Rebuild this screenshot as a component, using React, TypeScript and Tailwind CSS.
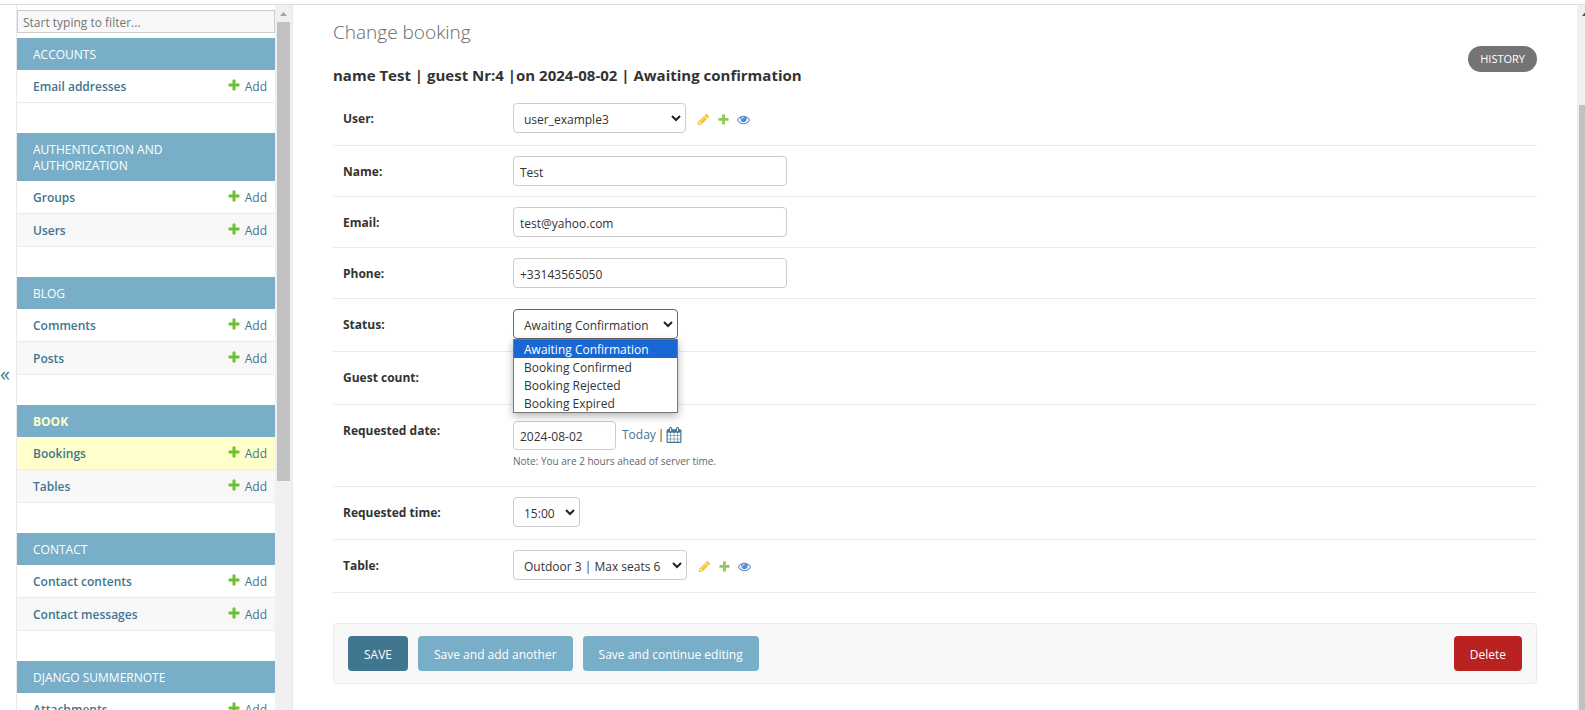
import { useState } from "react";
import type { ReactNode } from "react";

type Model = { name: string; current?: boolean };
type AppGroup = { title: string; current?: boolean; models: Model[] };

const groups: AppGroup[] = [
  { title: "Accounts", models: [{ name: "Email addresses" }] },
  { title: "Authentication and Authorization", models: [{ name: "Groups" }, { name: "Users" }] },
  { title: "Blog", models: [{ name: "Comments" }, { name: "Posts" }] },
  { title: "Book", current: true, models: [{ name: "Bookings", current: true }, { name: "Tables" }] },
  { title: "Contact", models: [{ name: "Contact contents" }, { name: "Contact messages" }] },
  { title: "Django Summernote", models: [{ name: "Attachments" }] },
];

const statuses = ["Awaiting Confirmation", "Booking Confirmed", "Booking Rejected", "Booking Expired"];

const PLUS =
  "M1600 796v192q0 40-28 68t-68 28h-416v416q0 40-28 68t-68 28h-192q-40 0-68-28t-28-68v-416h-416q-40 0-68-28t-28-68v-192q0-40 28-68t68-28h416v-416q0-40 28-68t68-28h192q40 0 68 28t28 68v416h416q40 0 68 28t28 68z";
const PENCIL =
  "M491 1536l91-91-235-235-91 91v107h128v128h107zm523-928q0-22-22-22-10 0-17 7l-542 542q-7 7-7 17 0 22 22 22 10 0 17-7l542-542q7-7 7-17zm-54-192l416 416-832 832h-416v-416zm683 96q0 53-37 90l-166 166-416-416 166-165q36-38 90-38 53 0 91 38l235 234q37 39 37 91z";
const EYE =
  "M1664 960q-152-236-381-353 61 104 61 225 0 185-131.5 316.5t-316.5 131.5-316.5-131.5-131.5-316.5q0-121 61-225-229 117-381 353 133 205 333.5 326.5t434.5 121.5 434.5-121.5 333.5-326.5zm-720-384q0-20-14-34t-34-14q-125 0-214.5 89.5t-89.5 214.5q0 20 14 34t34 14 34-14 14-34q0-86 61-147t147-61q20 0 34-14t14-34zm848 384q0 34-20 69-140 230-376.5 368.5t-499.5 138.5-499.5-139-376.5-368q-20-35-20-69t20-69q140-229 376.5-368t499.5-139 499.5 139 376.5 368q20 35 20 69z";
const CALENDAR =
  "M192 1664h288v-288h-288v288zm352 0h320v-288h-320v288zm-352-352h288v-320h-288v320zm352 0h320v-320h-320v320zm-352-384h288v-288h-288v288zm736 736h320v-288h-320v288zm-384-736h320v-288h-320v288zm768 736h288v-288h-288v288zm-384-352h320v-320h-320v320zm-352-864v-288q0-13-9.5-22.5t-22.5-9.5h-64q-13 0-22.5 9.5t-9.5 22.5v288q0 13 9.5 22.5t22.5 9.5h64q13 0 22.5-9.5t9.5-22.5zm736 864h288v-320h-288v320zm-384-384h320v-288h-320v288zm384 0h288v-288h-288v288zm32-480v-288q0-13-9.5-22.5t-22.5-9.5h-64q-13 0-22.5 9.5t-9.5 22.5v288q0 13 9.5 22.5t22.5 9.5h64q13 0 22.5-9.5t9.5-22.5zm384-64v1280q0 52-38 90t-90 38h-1408q-52 0-90-38t-38-90v-1280q0-52 38-90t90-38h128v-96q0-66 47-113t113-47h64q66 0 113 47t47 113v96h384v-96q0-66 47-113t113-47h64q66 0 113 47t47 113v96h128q52 0 90 38t38 90z";

function Icon({ d, className }: { d: string; className: string }) {
  return (
    <svg viewBox="0 0 1792 1792" fill="currentColor" aria-hidden="true" className={className}>
      <path d={d} />
    </svg>
  );
}

function Sidebar() {
  return (
    <nav aria-label="Sidebar" className="min-h-0 w-[258px] shrink-0 overflow-hidden pt-[5px]">
      <input
        type="search"
        aria-label="Filter navigation items"
        placeholder="Start typing to filter..."
        className="mb-[5px] block h-[23px] w-full border border-[#ccc] bg-[#f8f8f8] px-[5px] pt-0.5 placeholder:text-[#757575]"
      />
      {groups.map((group) => (
        <section key={group.title} className="mb-[30px]">
          <h2
            className={
              group.current
                ? "bg-[#79aec8] pt-[9px] pr-20 pb-[7px] pl-4 leading-4 font-bold text-[#ffc] uppercase"
                : "bg-[#79aec8] pt-[9px] pr-20 pb-[7px] pl-4 leading-4 text-white uppercase"
            }
          >
            <a href="#app">{group.title}</a>
          </h2>
          <ul>
            {group.models.map((model) => (
              <li
                key={model.name}
                className={
                  model.current
                    ? "flex h-[33px] items-center justify-between border-b border-[#eaeaea] bg-[#ffc] pt-0.5 pr-2 pl-4 text-[#417690]"
                    : "flex h-[33px] items-center justify-between border-b border-[#eaeaea] pt-0.5 pr-2 pl-4 text-[#417690] even:bg-[#f8f8f8]"
                }
              >
                <a href="#model" className="font-semibold">
                  {model.name}
                </a>
                <a href="#add" className="flex items-center gap-1">
                  <Icon d={PLUS} className="mb-1 size-[14px] text-[#70bf2b]" />
                  Add
                </a>
              </li>
            ))}
          </ul>
        </section>
      ))}
    </nav>
  );
}

function Row({ label, id, tall, children }: { label: string; id: string; tall?: boolean; children?: ReactNode }) {
  return (
    <div
      className={
        tall
          ? "flex min-h-[53px] border-b border-[#eaeaea] px-[10px] pt-[10px] pb-3"
          : "flex min-h-[51px] border-b border-[#eaeaea] p-[10px]"
      }
    >
      <label htmlFor={id} className="h-[30px] w-[170px] shrink-0 leading-8 font-bold">
        {label}
      </label>
      <div className="flex items-center">{children}</div>
    </div>
  );
}

function Select({ id, options, className }: { id: string; options: string[]; className: string }) {
  return (
    <span className="relative flex">
      <select
        id={id}
        className={"h-[30px] appearance-none rounded border bg-white pt-[3px] pr-5 pl-[10px] outline-none " + className}
      >
        {options.map((option) => (
          <option key={option}>{option}</option>
        ))}
      </select>
      <svg
        viewBox="0 0 10 7"
        aria-hidden="true"
        className="pointer-events-none absolute top-3 right-[5px] h-[7px] w-[10px]"
      >
        <path d="M1 1l4 4 4-4" fill="none" stroke="#222" strokeWidth="2" />
      </svg>
    </span>
  );
}

function RelatedLinks() {
  return (
    <span className="ml-[11px] flex items-center gap-[7px] pt-0.5 opacity-80">
      <a href="#change" aria-label="Change selected">
        <Icon d={PENCIL} className="size-[13px] text-[#efb80b]" />
      </a>
      <a href="#add" aria-label="Add another">
        <Icon d={PLUS} className="size-[13px] text-[#70bf2b]" />
      </a>
      <a href="#view" aria-label="View selected">
        <Icon d={EYE} className="size-[13px] text-[#2b70bf]" />
      </a>
    </span>
  );
}

const textInput = "h-[30px] w-[274px] rounded border border-[#ccc] px-1.5 pt-0.5";

export default function App() {
  const [status, setStatus] = useState(statuses[0]);
  return (
    <div className="flex h-screen flex-col overflow-hidden bg-white font-['Open_Sans','Noto_Sans',sans-serif] text-[12px] text-[#333]">
      <div className="h-[5px] shrink-0 border-b border-[#ddd]" />
      <div className="flex min-h-0 flex-1">
        <button
          type="button"
          aria-label="Toggle navigation"
          className="flex w-[17px] shrink-0 items-center border-r border-[#eaeaea] pt-8 text-xl text-[#417690]"
        >
          «
        </button>
        <Sidebar />
        <div aria-hidden="true" className="w-[18px] shrink-0 border-r border-[#eaeaea] bg-[#f0f0f0]">
          <svg viewBox="0 0 17 17" className="size-[17px]">
            <path d="M5 11l3.500-4 3.500 4z" fill="#a3a3a3" />
          </svg>
          <div className="ml-0.5 h-[459px] w-[13px] bg-[#c1c1c1]" />
        </div>

        <main className="min-w-0 flex-1 pt-[15px] pr-10 pl-10">
          <h1 className="h-[43px] text-[19px] leading-6 font-light text-[#666]">Change booking</h1>
          <div className="flex h-[30px] items-start justify-between">
            <h2 className="text-[15px] leading-6 font-bold">
              name Test | guest Nr:4 |on 2024-08-02 | Awaiting confirmation
            </h2>
            <a
              href="#history"
              className="-mt-[17px] flex h-[26px] items-center rounded-full bg-[#747474] px-3 text-[11px] text-white uppercase"
            >
              History
            </a>
          </div>

          <form onSubmit={(event) => event.preventDefault()}>
            <Row label="User:" id="user" tall>
              <Select id="user" options={["user_example3"]} className="w-[173px] border-[#ccc]" />
              <RelatedLinks />
            </Row>
            <Row label="Name:" id="name">
              <input id="name" defaultValue="Test" className={textInput} />
            </Row>
            <Row label="Email:" id="email">
              <input id="email" type="email" defaultValue="test@yahoo.com" className={textInput} />
            </Row>
            <Row label="Phone:" id="phone">
              <input id="phone" type="tel" defaultValue="+33143565050" className={textInput} />
            </Row>
            <Row label="Status:" id="status" tall>
              <div className="relative">
                <Select id="status" options={[status]} className="w-[165px] border-[#666]" />
                <ul
                  role="listbox"
                  aria-label="Status options"
                  className="absolute top-full left-0 z-10 w-full border border-[#767676] bg-white shadow-[0_3px_8px_rgba(0,0,0,0.3)]"
                >
                  {statuses.map((option) => (
                    <li
                      key={option}
                      role="option"
                      aria-selected={option === status}
                      onClick={() => setStatus(option)}
                      className="h-[18px] pl-[10px] leading-5 whitespace-nowrap aria-selected:bg-[#1967d2] aria-selected:text-white"
                    >
                      {option}
                    </li>
                  ))}
                </ul>
              </div>
            </Row>
            <Row label="Guest count:" id="guests" tall>
              <Select id="guests" options={["4"]} className="w-[67px] border-[#ccc]" />
            </Row>
            <div className="flex h-[82px] border-b border-[#eaeaea] px-[10px] pt-[10px]">
              <label htmlFor="date" className="h-[30px] w-[170px] shrink-0 leading-8 font-bold">
                Requested date:
              </label>
              <div className="pt-1.5">
                <div className="flex items-start">
                  <input
                    id="date"
                    defaultValue="2024-08-02"
                    className="h-[29px] w-[103px] rounded border border-[#ccc] px-1.5 pt-0.5"
                  />
                  <span className="ml-1.5 flex h-7 items-center gap-0.5">
                    <a href="#today" className="text-[#417690]">
                      Today
                    </a>
                    |
                    <a href="#calendar" aria-label="Choose a date" className="text-[#417690]">
                      <Icon d={CALENDAR} className="size-4" />
                    </a>
                  </span>
                </div>
                <p className="mt-0.5 text-[10px] leading-[18px] text-[#666]">Note: You are 2 hours ahead of server time.</p>
              </div>
            </div>
            <Row label="Requested time:" id="time" tall>
              <Select id="time" options={["15:00"]} className="w-[67px] border-[#ccc]" />
            </Row>
            <Row label="Table:" id="table" tall>
              <Select id="table" options={["Outdoor 3 | Max seats 6"]} className="w-[174px] border-[#ccc]" />
              <RelatedLinks />
            </Row>

            <div className="mt-[30px] flex h-[61px] items-center gap-[10px] rounded border border-[#eaeaea] bg-[#f8f8f8] px-[14px]">
              <button type="submit" className="h-[35px] rounded bg-[#417690] px-4 pt-0.5 text-white uppercase">
                Save
              </button>
              <button type="submit" className="h-[35px] rounded bg-[#79aec8] px-4 pt-0.5 text-white">
                Save and add another
              </button>
              <button type="submit" className="h-[35px] rounded bg-[#79aec8] px-4 pt-0.5 text-white">
                Save and continue editing
              </button>
              <a href="#delete" className="ml-auto flex h-[35px] items-center rounded bg-[#ba2121] px-4 pt-0.5 text-white">
                Delete
              </a>
            </div>
          </form>
        </main>

        <div aria-hidden="true" className="w-2 shrink-0 overflow-hidden bg-[#f0f0f0]">
          <svg viewBox="0 0 17 17" className="size-[17px]">
            <path d="M5 11l3.500-4 3.500 4z" fill="#505050" />
          </svg>
          <div className="mt-[83px] ml-0.5 h-full bg-[#c1c1c1]" />
        </div>
      </div>
    </div>
  );
}
